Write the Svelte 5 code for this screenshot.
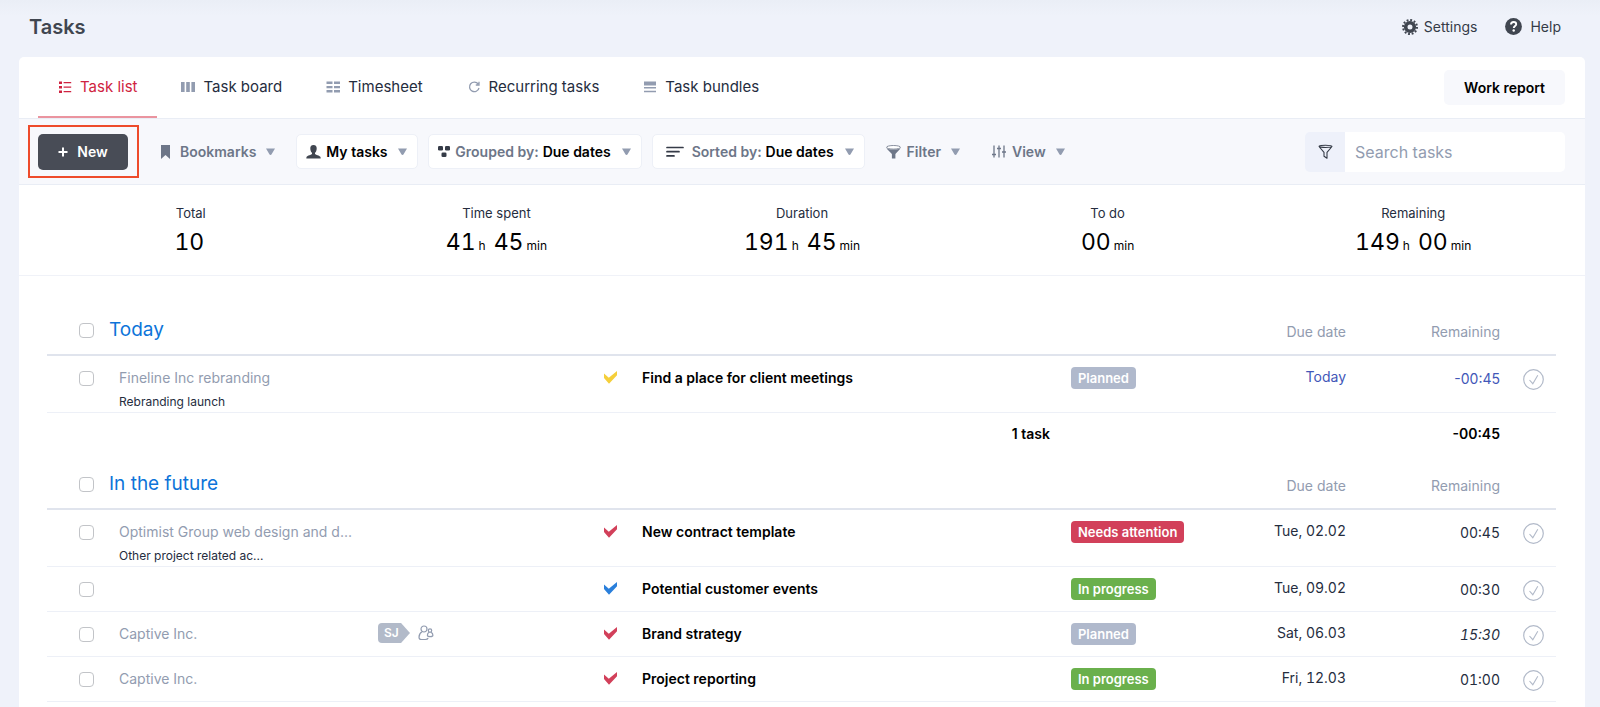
<script lang="ts">
    interface Task {
        project?: string;
        activity?: string;
        tag?: string;
        priority: 'yellow' | 'red' | 'blue';
        name: string;
        status: string;
        due: string;
        remaining: string;
        state?: 'today' | 'estimate';
    }

    interface Group {
        title: string;
        tasks: Task[];
        count?: string;
        total?: string;
    }

    const tabs = [
        { label: 'Task list', icon: 'list' },
        { label: 'Task board', icon: 'board' },
        { label: 'Timesheet', icon: 'timesheet' },
        { label: 'Recurring tasks', icon: 'recurring' },
        { label: 'Task bundles', icon: 'bundles' },
    ];

    const stats = [
        { label: 'Total', minutes: '10' },
        { label: 'Time spent', hours: '41', minutes: '45', unit: 'min' },
        { label: 'Duration', hours: '191', minutes: '45', unit: 'min' },
        { label: 'To do', minutes: '00', unit: 'min' },
        { label: 'Remaining', hours: '149', minutes: '00', unit: 'min' },
    ];

    const statusClass: Record<string, string> = {
        Planned: 'planned',
        'Needs attention': 'attention',
        'In progress': 'progress',
    };

    const groups: Group[] = [
        {
            title: 'Today',
            tasks: [
                { project: 'Fineline Inc rebranding', activity: 'Rebranding launch', priority: 'yellow', name: 'Find a place for client meetings', status: 'Planned', due: 'Today', remaining: '-00:45', state: 'today' },
            ],
            count: '1 task',
            total: '-00:45',
        },
        {
            title: 'In the future',
            tasks: [
                { project: 'Optimist Group web design and d...', activity: 'Other project related ac...', priority: 'red', name: 'New contract template', status: 'Needs attention', due: 'Tue, 02.02', remaining: '00:45' },
                { priority: 'blue', name: 'Potential customer events', status: 'In progress', due: 'Tue, 09.02', remaining: '00:30' },
                { project: 'Captive Inc.', tag: 'SJ', priority: 'red', name: 'Brand strategy', status: 'Planned', due: 'Sat, 06.03', remaining: '15:30', state: 'estimate' },
                { project: 'Captive Inc.', priority: 'red', name: 'Project reporting', status: 'In progress', due: 'Fri, 12.03', remaining: '01:00' },
            ],
        },
    ];

    let activeTab = $state('Task list');
    let search = $state('');
</script>

{#snippet caret()}
    <svg class="caret" width="9" height="7" viewBox="0 0 9 7"><path d="M0 .5h9L5.6 6.2a1.2 1.2 0 0 1-2.2 0z" fill="#929cb0" /></svg>
{/snippet}

{#snippet tabIcon(name: string)}
    <svg width="14" height="14" viewBox="0 0 14 14" fill="currentColor">
        {#if name === 'list'}
            <path d="M1 1.5h3v2.4H1zM1 6h3v2.4H1zM1 10.5h3v2.4H1zM5.6 2h7.6v1.2H5.6zM5.6 6.5h7.6v1.2H5.6zM5.6 11h7.6v1.2H5.6z" />
        {:else if name === 'board'}
            <path d="M0 2h3.6v10H0zM5.2 2h3.6v10H5.2zM10.4 2H14v10h-3.6z" />
        {:else if name === 'timesheet'}
            <path d="M.5 1.5h6v2.6h-6zM8 1.5h6v2.6H8zM.5 6h6v2.2h-6zM8 6h6v2.2H8zM.5 10h6v2.6h-6zM8 10h6v2.6H8z" />
        {:else if name === 'recurring'}
            <path d="M11.2 4A4.8 4.8 0 1 0 12 8M12 1.8v3.2H8.8" fill="none" stroke="currentColor" stroke-width="1.3" />
        {:else}
            <path d="M1 1.6h12v3.8H1zM1 7h12v1.5H1zM1 10.8h12v1.5H1z" />
        {/if}
    </svg>
{/snippet}

<div class="page">
    <header>
        <h1>Tasks</h1>
        <nav class="links">
            <a href="#settings">
                <svg width="16" height="16" viewBox="0 0 16 16">
                    <circle cx="8" cy="8" r="4.3" fill="none" stroke="#404650" stroke-width="3.6" />
                    <circle cx="8" cy="8" r="7" fill="none" stroke="#404650" stroke-width="2" stroke-dasharray="1.9 1.765" />
                </svg>
                Settings
            </a>
            <a class="help" href="#help">
                <svg width="17" height="17" viewBox="0 0 17 17">
                    <circle cx="8.5" cy="8.5" r="8.4" fill="#404650" />
                    <path d="M6 6.6C6 4.9 7.1 4 8.6 4s2.6.9 2.6 2.2c0 1.9-2.4 1.8-2.4 3.9" fill="none" stroke="#fff" stroke-width="1.9" />
                    <circle cx="8.7" cy="12.5" r="1.2" fill="#fff" />
                </svg>
                Help
            </a>
        </nav>
    </header>

    <main>
        <div class="tabbar">
            <nav class="tabs">
                {#each tabs as tab}
                    <a href="#{tab.icon}" class:active={activeTab === tab.label} onclick={() => (activeTab = tab.label)}>
                        {@render tabIcon(tab.icon)}{tab.label}
                    </a>
                {/each}
            </nav>
            <button class="report">Work report</button>
        </div>

        <div class="toolbar">
            <div class="highlight">
                <button class="new">
                    <svg width="10" height="10" viewBox="0 0 10 10"><path d="M5 .5v9M.5 5h9" stroke="#fff" stroke-width="2" /></svg>
                    New
                </button>
            </div>
            <button class="menu bookmarks">
                <svg width="9" height="14" viewBox="0 0 9 14"><path d="M0 0h9v14L4.5 10 0 14z" fill="#6d7688" /></svg>
                Bookmarks
                {@render caret()}
            </button>
            <label class="box owner">
                <svg width="15" height="14" viewBox="0 0 15 14"><path d="M7.5 0C5.2 0 4.1 1.5 4.3 3.7c.1 1.9.8 3.3 1.7 4.1v1.3c-.5.9-4.6 1.3-5.5 3L.3 13.6h14.4l-.2-1.5c-.9-1.7-5-2.1-5.5-3V7.8c.9-.8 1.6-2.2 1.7-4.1C10.9 1.5 9.8 0 7.5 0z" fill="#404650" /></svg>
                <select aria-label="Task owner"><option>My tasks</option></select>
                {@render caret()}
            </label>
            <label class="box grouped">
                <svg width="12" height="12" viewBox="0 0 12 12" fill="#353b47"><rect width="5" height="4.5" rx="1.3" /><rect x="7" width="5" height="4.5" rx="1.3" /><rect x="3.5" y="6.5" width="5" height="4.5" rx="1.3" /></svg>
                <span>Grouped by:</span>
                <select><option>Due dates</option></select>
                {@render caret()}
            </label>
            <label class="box sorted">
                <svg width="18" height="12" viewBox="0 0 18 12"><path d="M1 1.5h16M1 5.7h12M1 9.9h7" stroke="#353b47" stroke-width="1.7" stroke-linecap="round" /></svg>
                <span>Sorted by:</span>
                <select><option>Due dates</option></select>
                {@render caret()}
            </label>
            <button class="menu filter">
                <svg width="15" height="14" viewBox="0 0 15 14"><ellipse cx="7.5" cy="2.3" rx="7" ry="1.8" fill="#fff" stroke="#6d7688" stroke-width=".8" /><path d="M.3 3.2c2 1.7 12.4 1.7 14.4 0L9.4 9v4.4H5.9V9z" fill="#6d7688" /></svg>
                Filter
                {@render caret()}
            </button>
            <button class="menu view">
                <svg width="14" height="13" viewBox="0 0 14 13" stroke="#6d7688" stroke-width="1.3"><path d="M2 .5v12M7 .5v12M12 .5v12M0 9.5h4M5 3.5h4M10 7h4" /></svg>
                View
                {@render caret()}
            </button>
            <form class="search">
                <button type="button" aria-label="Search filters">
                    <svg width="15" height="15" viewBox="0 0 15 15" fill="none" stroke="#353b47" stroke-width="1.1"><path d="M1 2.5L6 8.3v3.9l3 2V8.3l5-5.8M1 2.3c0-1.5 13-1.5 13 0S1 3.8 1 2.3z" stroke-linejoin="round" /></svg>
                </button>
                <input type="text" placeholder="Search tasks" aria-label="Search tasks" bind:value={search} />
            </form>
        </div>

        <dl class="stats">
            {#each stats as stat}
                <div>
                    <dt>{stat.label}</dt>
                    <dd>
                        {#if stat.hours}<span>{stat.hours}</span><small class="hours">h</small>{/if}<span>{stat.minutes}</span>{#if stat.unit}<small>{stat.unit}</small>{/if}
                    </dd>
                </div>
            {/each}
        </dl>

        <div class="groups">
            {#each groups as group}
                <table>
                    <colgroup>
                        <col class="col-check" />
                        <col class="col-project" />
                        <col class="col-tag" />
                        <col class="col-priority" />
                        <col />
                        <col class="col-status" />
                        <col class="col-due" />
                        <col class="col-remaining" />
                        <col class="col-done" />
                    </colgroup>
                    <thead>
                        <tr>
                            <th class="check"><input type="checkbox" aria-label="Select all in {group.title}" /></th>
                            <th class="title" colspan="5">{group.title}</th>
                            <th class="right">Due date</th>
                            <th class="right">Remaining</th>
                            <th></th>
                        </tr>
                    </thead>
                    <tbody>
                        {#each group.tasks as task}
                            <tr>
                                <td class="check"><input type="checkbox" aria-label="Select {task.name}" /></td>
                                <td class="project">
                                    {task.project ?? ''}
                                    {#if task.activity}<div class="activity">{task.activity}</div>{/if}
                                </td>
                                <td class="assigned">
                                    {#if task.tag}
                                        <div class="people">
                                            <span class="tag">{task.tag}</span>
                                            <svg width="16" height="16" viewBox="0 0 16 16" fill="none" stroke="#929cb0" stroke-width="1.2">
                                                <circle cx="6" cy="4" r="3" />
                                                <path d="M4 6.8C2 8 1 9.8 1 12.2c0 1.6 1 2.3 2.5 2.3h3.8c1.5 0 2.500-.5 2.8-1.500" />
                                                <circle cx="12" cy="5.6" r="1.7" />
                                                <path d="M11 7.2c-1.1.8-1.6 2-1.6 3 0 1 .8 1.4 2.7 1.4s2.8-.4 2.8-1.4c0-1.1-.6-2.2-1.7-3" />
                                            </svg>
                                        </div>
                                    {/if}
                                </td>
                                <td class={task.priority}>
                                    <svg width="13" height="13" viewBox="0 0 13 13"><path d="M0 2.6l4.8 4.2L13 0v4.3L5 12.7 0 7z" fill="currentColor" /></svg>
                                </td>
                                <td class="name">{task.name}</td>
                                <td class="status"><span class="badge {statusClass[task.status]}">{task.status}</span></td>
                                <td class="due {task.state}">{task.due}</td>
                                <td class="remaining {task.state}">{task.remaining}</td>
                                <td class="done">
                                    <button aria-label="Mark {task.name} as done">
                                        <svg width="21" height="21" viewBox="0 0 21 21" fill="none" stroke="#b2bac9"><circle cx="10.5" cy="10.5" r="9.8" stroke-width="1.2" /><path d="M6.5 11l3.3 3.7L14.8 6.3" stroke-width="1.1" /></svg>
                                    </button>
                                </td>
                            </tr>
                        {/each}
                    </tbody>
                    {#if group.count}
                        <tfoot>
                            <tr>
                                <td class="count" colspan="5">{group.count}</td>
                                <td colspan="2"></td>
                                <td class="right">{group.total}</td>
                                <td></td>
                            </tr>
                        </tfoot>
                    {/if}
                </table>
            {/each}
        </div>
    </main>
</div>

<style>
    :global(body) {
        background: #eff2fa;
    }
    .page {
        display: flex;
        flex-direction: column;
        box-sizing: border-box;
        min-height: 100vh;
        padding: 0 15px 0 19px;
        background: linear-gradient(#eaeef6, #eff2fa 16px);
        color: #252d3e;
        font-family: Inter, 'Liberation Sans', sans-serif;
        font-size: 14px;
        line-height: 20px;
    }
    header {
        display: flex;
        align-items: center;
        justify-content: space-between;
        height: 57px;
        box-sizing: border-box;
        padding: 0 24px 4px 10px;
    }
    h1 {
        margin: 0;
        font-size: 20px;
        font-weight: 600;
        color: #404650;
    }
    a {
        color: inherit;
        text-decoration: none;
    }
    button {
        padding: 0;
        border: none;
        background: none;
        color: inherit;
        font: inherit;
        cursor: pointer;
    }
    svg {
        flex: none;
        display: block;
    }
    .links {
        display: flex;
        gap: 28px;
        color: #353b47;
    }
    .links a {
        display: flex;
        align-items: center;
        gap: 6px;
    }
    .links .help {
        gap: 8px;
    }

    main {
        flex: 1;
        border-radius: 5px 5px 0 0;
        background: #fff;
    }
    .tabbar {
        display: flex;
        align-items: center;
        justify-content: space-between;
        height: 61px;
        padding: 0 20px 0 19px;
        border-bottom: 1px solid #e9edf5;
    }
    .tabs {
        display: flex;
        gap: 4px;
        height: 100%;
        font-size: 15px;
    }
    .tabs a {
        display: flex;
        align-items: center;
        gap: 8px;
        padding: 0 20px;
        border-bottom: 2px solid transparent;
    }
    .tabs svg {
        color: #929cb0;
    }
    .tabs .active {
        border-color: #ea949f;
        color: #cf2340;
    }
    .tabs .active svg {
        color: inherit;
    }
    .report {
        height: 35px;
        padding: 0 20px;
        border-radius: 5px;
        background: #f7f8fc;
        color: #000;
        font-weight: 600;
    }

    .toolbar {
        display: flex;
        align-items: center;
        height: 65px;
        padding: 0 20px 0 19px;
        border-bottom: 1px solid #e9edf5;
        background: #f7f8fc;
        font-weight: 600;
    }
    .highlight {
        position: relative;
    }
    .highlight::after {
        content: '';
        position: absolute;
        inset: -9px -11px -8px -10px;
        border: 2px solid #ee4b2b;
        pointer-events: none;
    }
    .new {
        display: flex;
        align-items: center;
        justify-content: center;
        gap: 9px;
        width: 90px;
        height: 36px;
        border-radius: 5px;
        background: #484c56;
        color: #fff;
    }
    .menu,
    .box {
        display: flex;
        align-items: center;
        color: #6d7688;
    }
    .caret {
        margin-left: 10px;
    }
    .bookmarks {
        gap: 10px;
        margin: 0 21px 0 33px;
    }
    .bookmarks .caret,
    .filter .caret,
    .view .caret {
        margin-left: 0;
    }
    .box {
        box-sizing: border-box;
        height: 35px;
        padding: 0 10px 0 9px;
        border: 1px solid #edf0f7;
        border-radius: 5px;
        background: #fff;
        white-space: pre;
    }
    .box svg:first-child {
        margin-right: 5px;
    }
    .box span {
        margin-right: 4px;
    }
    .grouped,
    .sorted {
        margin-left: 10px;
    }
    .sorted {
        padding-left: 13px;
    }
    .sorted svg:first-child {
        margin-right: 8px;
    }
    select {
        appearance: none;
        padding: 0;
        border: none;
        background: none;
        color: #000;
        font: inherit;
        cursor: pointer;
    }
    .filter,
    .view {
        gap: 6px;
        margin-left: 21px;
    }
    .filter .caret,
    .view .caret {
        margin-left: 4px;
    }
    .view {
        margin-left: 32px;
    }
    .search {
        display: flex;
        width: 260px;
        height: 40px;
        margin-left: auto;
        border-radius: 5px;
        overflow: hidden;
    }
    .search button {
        display: flex;
        align-items: center;
        justify-content: center;
        flex: none;
        width: 40px;
        background: #eef1fa;
    }
    .search input {
        flex: 1;
        min-width: 0;
        padding: 0 10px;
        border: none;
        outline: none;
        background: #fff;
        color: #252d3e;
        font: inherit;
        font-size: 16px;
        font-weight: 400;
    }
    .search input::placeholder {
        color: #929cb0;
    }

    .stats {
        display: grid;
        grid-template-columns: repeat(5, 1fr);
        height: 90px;
        margin: 0;
        padding: 0 19px;
        border-bottom: 1px solid #f0f2f8;
        text-align: center;
    }
    dt {
        padding-top: 18px;
        font-size: 13px;
    }
    dd {
        margin: 5px 0 0;
        font-size: 23px;
        line-height: 28px;
        font-variant-numeric: tabular-nums;
        color: #000;
    }
    dd span {
        margin-right: 3px;
    }
    small {
        font-size: 12px;
    }
    .hours {
        margin-right: 8px;
    }

    .groups {
        padding: 30px 29px 0 28px;
    }
    table {
        width: 100%;
        table-layout: fixed;
        border-collapse: separate;
        border-spacing: 0;
    }
    .col-check {
        width: 62px;
    }
    .col-project {
        width: 269px;
    }
    .col-tag {
        width: 226px;
    }
    .col-priority {
        width: 38px;
    }
    .col-status {
        width: 140px;
    }
    .col-due {
        width: 135px;
    }
    .col-remaining {
        width: 154px;
    }
    .col-done {
        width: 56px;
    }
    th,
    td {
        padding: 0;
        text-align: left;
        vertical-align: top;
    }
    th {
        height: 32px;
        padding-top: 16px;
        border-bottom: 2px solid #e0e4ed;
        color: #929cb0;
        font-weight: 400;
    }
    th.check,
    th.title {
        height: 34px;
        padding-top: 14px;
    }
    .title {
        color: #0d74d9;
        font-size: 19px;
    }
    tbody tr {
        height: 45px;
    }
    tbody td {
        padding-top: 12px;
        border-bottom: 1px solid #edf0f7;
        white-space: nowrap;
    }
    input[type='checkbox'] {
        appearance: none;
        display: block;
        box-sizing: border-box;
        width: 15px;
        height: 15px;
        margin: 3px 0 0 32px;
        border: 1px solid #c2c4c8;
        border-radius: 4px;
        background: #fff;
    }
    .project {
        padding-left: 10px;
        color: #929cb0;
    }
    .activity {
        margin-top: 4px;
        color: #252d3e;
        font-size: 12px;
    }
    .people {
        display: flex;
        align-items: center;
        gap: 8px;
    }
    .people svg {
        margin: 0;
    }
    .tag {
        width: 32px;
        box-sizing: border-box;
        padding-left: 6px;
        border-radius: 4px 0 0 4px;
        background: #b2bac9;
        clip-path: polygon(0 0, 72% 0, 100% 50%, 72% 100%, 0 100%);
        color: #fff;
        font-size: 12px;
        font-weight: 600;
    }
    td svg {
        margin-top: 3px;
    }
    td.yellow {
        color: #f5cf3b;
    }
    td.red {
        color: #d2405a;
    }
    td.blue {
        color: #2a7fdb;
    }
    .name {
        color: #000;
        font-weight: 600;
    }
    tbody .assigned,
    tbody .status,
    tbody .due {
        padding-top: 11px;
    }
    .badge {
        display: inline-block;
        padding: 0 7px;
        border-radius: 4px;
        line-height: 22px;
        color: #fff;
        font-size: 13px;
        font-weight: 600;
        vertical-align: top;
    }
    .planned {
        background: #b0b9cc;
    }
    .attention {
        background: #d2405a;
    }
    .progress {
        background: #6ab04c;
    }
    .right,
    .due,
    .remaining {
        text-align: right;
    }
    .due,
    .remaining {
        font-variant-numeric: tabular-nums;
    }
    tbody .remaining,
    tbody .done {
        padding-top: 13px;
    }
    .today {
        color: #4257b8;
        font-variant-numeric: normal;
    }
    .remaining.estimate {
        font-style: italic;
    }
    .done button {
        display: block;
        margin-left: 23px;
    }
    .done svg {
        margin: 0;
    }
    tfoot td {
        height: 36px;
        padding-top: 11px;
        color: #000;
        font-weight: 600;
    }
    .count {
        padding-right: 21px;
        text-align: right;
    }
</style>
